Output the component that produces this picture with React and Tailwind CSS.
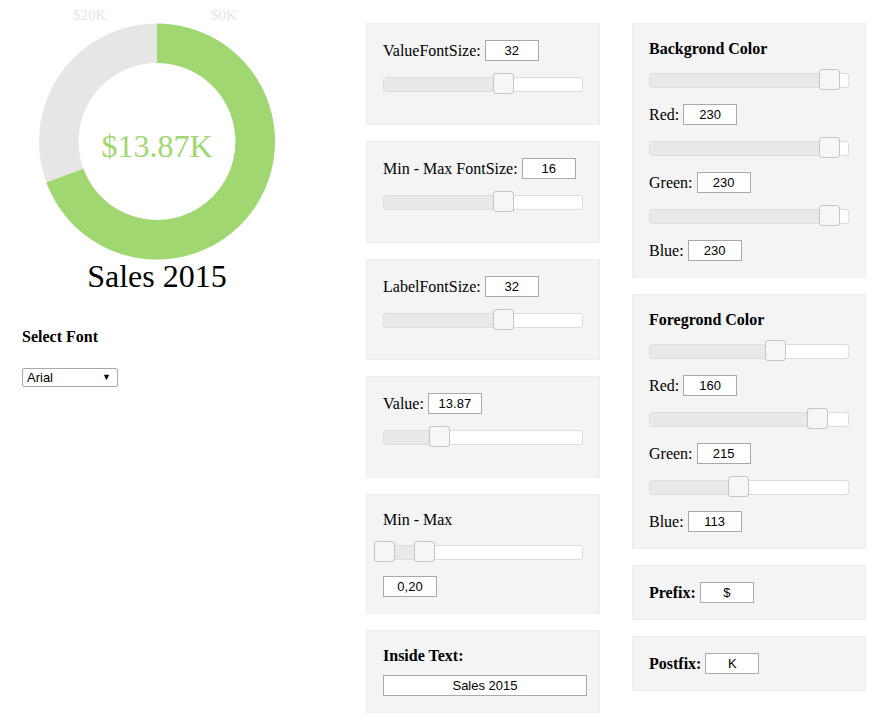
import React from "react";

const serif = { fontFamily: '"Liberation Serif", "Times New Roman", serif' };

function Slider({ from = 0, to, handles }) {
  const W = 198;
  return (
    <div className="relative w-[200px] h-[15px] border border-[#dddddd] bg-white rounded-[3px]">
      <div
        className="absolute top-0 bottom-0 bg-[#e9e9e9] rounded-l-[2px]"
        style={{ left: from * W, width: (to - from) * W }}
      />
      {handles.map((p, i) => (
        <div
          key={i}
          className="absolute top-[-5px] w-[21px] h-[21px] bg-[#f6f6f6] border border-[#c5c5c5] rounded-[3px]"
          style={{ left: p * W - 9.6 }}
        />
      ))}
    </div>
  );
}

function Input({ value, w = "w-[54px]" }) {
  return (
    <input
      readOnly
      value={value}
      className={`${w} h-[21px] border border-[#a9a9a9] bg-white text-center text-[13px] text-black outline-none px-0`}
      style={{ fontFamily: '"Liberation Sans", Arial, sans-serif' }}
    />
  );
}

function Row({ label, value, bold }) {
  return (
    <div className="flex items-center gap-1 h-[21px]">
      <span className={`text-[16px] leading-[18px] ${bold ? "font-bold" : ""}`}>{label}</span>
      <Input value={value} />
    </div>
  );
}

function Panel({ children, className = "" }) {
  return (
    <div className={`bg-[#f4f4f4] border border-[#ececec] p-4 flex flex-col ${className}`}>
      {children}
    </div>
  );
}

function Gauge() {
  return (
    <svg width="314" height="300" className="block">
      <text x="89.7" y="20" textAnchor="middle" fontSize="15" fill="#e6e6e6" style={serif}>$20K</text>
      <text x="224" y="20" textAnchor="middle" fontSize="15" fill="#e6e6e6" style={serif}>$0K</text>
      <circle cx="157" cy="141.5" r="98.25" fill="none" stroke="#e6e6e6" strokeWidth="39.5" />
      <path
        d="M157 23.5 A118 118 0 1 1 46.35 182.51 L83.39 168.78 A78.5 78.5 0 1 0 157 63 Z"
        fill="#a0d771"
      />
      <text x="157" y="157" textAnchor="middle" fontSize="32" fill="#a0d771" style={serif}>$13.87K</text>
      <text x="157" y="287" textAnchor="middle" fontSize="32" fill="#000" style={serif}>Sales 2015</text>
    </svg>
  );
}

export default function App() {
  const fg = [160, 215, 113];
  return (
    <div className="flex bg-white text-black min-h-[727px] w-[876px]" style={serif}>
      <div className="w-[366px] flex flex-col">
        <Gauge />
        <div className="pl-[22px]">
          <div className="mt-[28px] text-[16px] leading-[18px] font-bold">Select Font</div>
          <div
            className="mt-[22px] w-[96px] h-[19px] border border-[#a9a9a9] rounded-[2px] bg-white flex items-center justify-between pl-[4px] pr-[6px] text-[13px]"
            style={{ fontFamily: '"Liberation Sans", Arial, sans-serif' }}
          >
            <span>Arial</span>
            <span className="text-[9px]">▼</span>
          </div>
        </div>
      </div>

      <div className="w-[234px] flex flex-col gap-4 pt-[23px]">
        <Panel className="h-[102px] gap-4">
          <Row label="ValueFontSize:" value="32" />
          <Slider to={0.6} handles={[0.6]} />
        </Panel>
        <Panel className="h-[102px] gap-4">
          <Row label="Min - Max FontSize:" value="16" />
          <Slider to={0.6} handles={[0.6]} />
        </Panel>
        <Panel className="h-[101px] gap-4">
          <Row label="LabelFontSize:" value="32" />
          <Slider to={0.6} handles={[0.6]} />
        </Panel>
        <Panel className="h-[102px] gap-4">
          <Row label="Value:" value="13.87" />
          <Slider to={0.2774} handles={[0.2774]} />
        </Panel>
        <Panel className="gap-4">
          <div className="text-[16px] leading-[18px]">Min - Max</div>
          <Slider from={0} to={0.2} handles={[0, 0.2]} />
          <Input value="0,20" />
        </Panel>
        <Panel className="gap-[10px]">
          <div className="text-[16px] leading-[18px] font-bold">Inside Text:</div>
          <Input value="Sales 2015" w="w-[204px]" />
        </Panel>
      </div>

      <div className="w-[234px] ml-[32px] flex flex-col gap-4 pt-[23px]">
        <Panel className="gap-4">
          <div className="text-[16px] leading-[17px] font-bold">Backgrond Color</div>
          <Slider to={230 / 255} handles={[230 / 255]} />
          <Row label="Red:" value="230" />
          <Slider to={230 / 255} handles={[230 / 255]} />
          <Row label="Green:" value="230" />
          <Slider to={230 / 255} handles={[230 / 255]} />
          <Row label="Blue:" value="230" />
        </Panel>
        <Panel className="gap-4">
          <div className="text-[16px] leading-[17px] font-bold">Foregrond Color</div>
          <Slider to={fg[0] / 255} handles={[fg[0] / 255]} />
          <Row label="Red:" value="160" />
          <Slider to={fg[1] / 255} handles={[fg[1] / 255]} />
          <Row label="Green:" value="215" />
          <Slider to={fg[2] / 255} handles={[fg[2] / 255]} />
          <Row label="Blue:" value="113" />
        </Panel>
        <Panel>
          <Row label="Prefix:" value="$" bold />
        </Panel>
        <Panel>
          <Row label="Postfix:" value="K" bold />
        </Panel>
      </div>
    </div>
  );
}
